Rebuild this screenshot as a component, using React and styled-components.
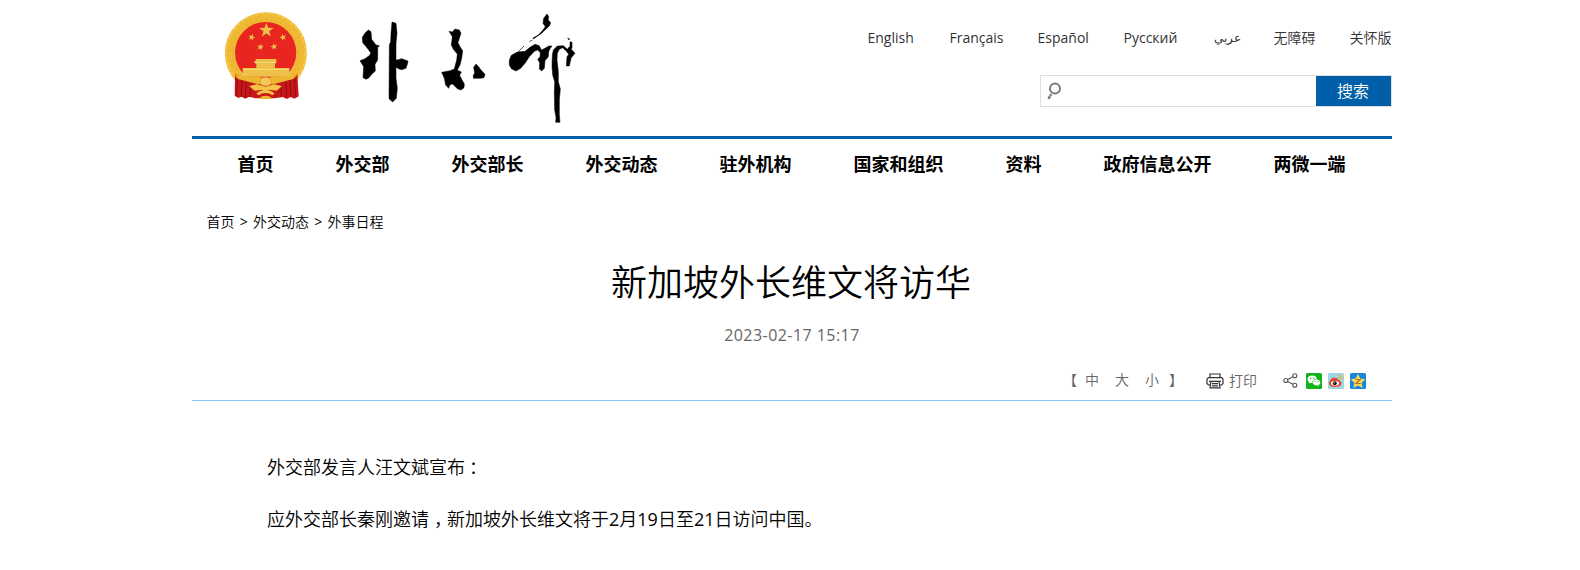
import React from 'react'
import styled, { createGlobalStyle } from 'styled-components';

const languages = [
  { label: 'English', width: 48, weight: 400 },
  { label: 'Français', width: 54, weight: 400 },
  { label: 'Español', width: 52, weight: 400 },
  { label: 'Русский', width: 56, weight: 400 },
  { label: 'عربي', width: 26, weight: 400, size: 12 },
  { label: '无障碍', width: 42 },
  { label: '关怀版', width: 42.5 },
];

const menus = ['首页', '外交部', '外交部长', '外交动态', '驻外机构', '国家和组织', '资料', '政府信息公开', '两微一端'];

const starPoints = (cx, cy, r, turn = -90) =>
  Array.from({ length: 10 }, (_, i) => {
    const radius = i % 2 ? r * 0.4 : r;
    const angle = (turn + i * 36) * Math.PI / 180;
    return `${(cx + radius * Math.cos(angle)).toFixed(1)},${(cy + radius * Math.sin(angle)).toFixed(1)}`;
  }).join(' ');

const Emblem = () => (
  <EmblemSvg viewBox="0 0 300 300">
    <circle cx="152.500" cy="145" r="107" fill="none" stroke="#efb934" strokeWidth="32" />
    <circle cx="152.500" cy="145" r="119" fill="none" stroke="#f4ca50" strokeWidth="5" strokeDasharray="11 5" />
    <circle cx="152" cy="143" r="99" fill="none" stroke="#e0a528" strokeWidth="2" strokeDasharray="7 9" />
    <circle cx="152" cy="143" r="92" fill="#e8251f" />
    <g fill="#edc04a">
      <polygon points={starPoints(154, 76, 23)} />
      <polygon points={starPoints(110, 97, 11, -75)} />
      <polygon points={starPoints(204, 97, 11, -105)} />
      <polygon points={starPoints(136, 126, 11, -75)} />
      <polygon points={starPoints(177, 125, 11, -105)} />
      <path d="M122 162h62v10l-4 5v12h43v14l5 3v9H79v-9l4-3v-14h41v-12l-8-5 6-4z" />
    </g>
    <path d="M84 193h138M118 172h66" stroke="#f9de7c" strokeWidth="3" />
    <path d="M60 207c20 11 40 18 64 17l28 12 29-12c26 1 46-6 66-17l4 67-13 7-11-5-12 6-12-6-24 4H120l-17-5-12 6-12-6-9 4-11-7z" fill="#c8161a" />
    <path d="M68 216l-3 58M81 222l-3 54M94 226l-3 51M106 240l-1 36M238 216l4 58M225 222l3 54M212 226l3 51M199 240l-1 36" stroke="#8f0d13" strokeWidth="3" />
    <path d="M56 208c14 5 33 7 58 6l20 2 18 6 18-6 20-2c25 1 45-1 59-6l-14 14-34 9-24 6-25 3-25-3-24-6-34-9z" fill="#edb630" />
    <path d="M102 243l24-5 26 7 25-7 24 5-16 14-22-3-11 5-11-5-22 3z" fill="#f3c445" />
    <path d="M124 266c12-15 43-15 55 0l-8 5c-9-9-30-9-39 0z" fill="#f2c346" />
    <ellipse cx="152" cy="230" rx="17" ry="13" fill="#f4ca56" stroke="#d6962a" strokeWidth="2" />
    <path d="M133 282c4-13 34-13 38 0z" fill="#edb333" />
  </EmblemSvg>
);

const Calligraphy = () => (
  <CalligraphySvg viewBox="0 0 720 345">
    <path d="M55 60L63 65 65 88 78 105 88 107 83 113 83 150 75 163 76 183 66 192 57 203 48 208 39 203 41 170 30 152 45 146 60 135 62 128 50 112 38 98 37 82 46 68Z" />
    <path d="M126 36L138 40 141 70 138 100 138 150 145 149 155 146 174 153 172 163 168 175 155 179 145 176 138 171 138 205 142 235 139 265 128 276 117 266 118 105 122 95 123 70Z" />
    <path d="M297 64L307 66 315 57 328 60 333 70 328 85 324 98 330 110 338 122 335 145 330 165 322 180 334 186 329 196 335 208 343 222 342 233 333 240 322 236 308 222 300 224 296 235 287 225 283 205 275 187 300 182 313 177 320 150 322 132 310 118 304 105 307 80Z" />
    <g transform="translate(360 0)">
      <path d="M18 162L24 168 33 180 45 193 42 203 30 205 10 205 10 195 14 190 11 172Z" />
      <path d="M231 12L236 20 235 30 242 38 238 48 228 57 215 70 200 80 190 87 189 84 205 75 217 62 226 50 219 40 221 25Z" />
      <path d="M178 95L187 90M145 125L162 108" fill="none" strokeWidth="2" />
      <path d="M118 150L124 136 142 126 165 124 180 112 195 103 208 107 214 120 225 115 236 108 246 108 240 116 236 125 235 140 225 152 223 175 215 183 208 177 209 158 203 148 210 140 211 128 203 120 193 124 178 140 165 160 152 175 138 183 124 176 118 165Z" />
      <path d="M247 135L250 120 262 108 280 107 292 118 298 110 304 118 315 130 308 138 303 145 298 168 289 168 291 140 296 133 288 122 278 113 268 118 262 130 261 150 265 185 265 215 271 237 268 270 268 315 270 337 257 337 258 322 254 300 253 250 254 215 248 195 246 170Z" />
      <path d="M293 84L299 87 297 90ZM300 95L306 97 306 115 300 118Z" />
    </g>
  </CalligraphySvg>
);

const SearchIcon = () => (
  <svg width="16" height="18" viewBox="0 0 16 18" fill="none" stroke="#7b7b7b">
    <circle cx="9" cy="6.500" r="5" strokeWidth="2" />
    <path d="M5.200 12.200L2.500 16.800" strokeWidth="2.600" />
    <path d="M2.400 13.200l4 2" stroke="#fff" strokeWidth=".5" />
  </svg>
);

const PrintIcon = () => (
  <svg width="18" height="16" viewBox="0 0 18 16" fill="none" stroke="#333" strokeWidth="1.200">
    <path d="M4 4.500V1h10v3.500M4 12H2.400L1 10.500V6l1.400-1.400h13.200L17 6v4.500L15.600 12H14" />
    <path d="M5 8.500h8l1 6.400H4zM6 10.600h6M6 12.800h6M3 8.400h12" />
  </svg>
);

const ShareIcon = () => (
  <svg width="15" height="15" viewBox="0 0 15 15" fill="none" stroke="#555" strokeWidth="1.100">
    <circle cx="2.800" cy="7.500" r="2" />
    <circle cx="11.800" cy="2.800" r="2" />
    <circle cx="11.800" cy="12.200" r="2" />
    <path d="M4.700 6.500l5.200-2.700M4.700 8.500l5.200 2.700" />
  </svg>
);

const WechatIcon = () => (
  <svg width="16" height="16" viewBox="0 0 16 16">
    <rect width="16" height="16" rx="1.500" fill="#10b31b" />
    <path d="M6.200 2.500C3.600 2.500 1.500 4.200 1.500 6.300c0 1.200.7 2.200 1.700 2.900l-.4 1.500 1.700-.9c3.800.9 6.400-1.100 6.400-3.500 0-2.100-2.100-3.800-4.700-3.800z" fill="#fff" />
    <path d="M10.600 6.200c-2.200 0-4 1.400-4 3.300s1.800 3.300 4 3.300l1.300-.2 1.500.9-.4-1.400c1-.6 1.600-1.500 1.600-2.600 0-1.900-1.800-3.300-4-3.300z" fill="#fff" stroke="#10b31b" strokeWidth=".6" />
    <g fill="#10b31b">
      <circle cx="4.700" cy="5.200" r=".7" />
      <circle cx="7.900" cy="5.200" r=".7" />
      <circle cx="9.300" cy="8.600" r=".6" />
      <circle cx="12" cy="8.600" r=".6" />
    </g>
  </svg>
);

const WeiboIcon = () => (
  <svg width="16" height="16" viewBox="0 0 16 16">
    <rect width="16" height="16" rx="1.500" fill="#9bd7e4" />
    <path d="M6.900 5.200c1.200-.5 2.400-.4 2.700.6l-.1 1.100c1.600-.4 2.600.2 2.400 1.400 1.300.5 1.900 1.400 1.600 2.400-.5 2-3.200 3.300-6.300 3.300-3.500 0-6.200-1.400-6.200-3.700 0-2.200 3.100-5.700 5.100-5.700.8 0 1 .3.800.6z" fill="#e8452a" />
    <ellipse cx="7" cy="10.300" rx="4" ry="2.400" fill="#fff" />
    <circle cx="6.800" cy="10.300" r="2" fill="#161616" />
    <circle cx="6.200" cy="9.800" r=".6" fill="#fff" />
    <path d="M10.200 2.500c2.700-.5 4.700 1.400 4.200 4M10.400 4.500c1.400-.2 2.300.7 2.100 2" fill="none" stroke="#f2b23b" strokeWidth="1.200" />
  </svg>
);

const QzoneIcon = () => (
  <svg width="16" height="16" viewBox="0 0 16 16">
    <rect width="16" height="16" rx="1.500" fill="#1687dc" />
    <path d="M8 .8l2.200 4.700 5.200.7-3.800 3.600 1 5.200L8 12.600 3.400 15l1-5.200L.6 6.200l5.200-.7z" fill="#fbd95a" />
    <path d="M5.500 6.500h4.800L6 10.500h4.800" fill="none" stroke="#b5761b" strokeWidth="1.200" />
  </svg>
);

const App = () => {
  return (
    <>
      <GlobalStyle />
      <Page>
        <Header>
          <Emblem />
          <Calligraphy />
          <HeaderSide>
            <LanguageList>
              {languages.map(item => (
                <Language key={item.label} $width={item.width} $weight={item.weight} $size={item.size}>{item.label}</Language>
              ))}
            </LanguageList>
            <SearchBox>
              <SearchIcon />
              <SearchButton>搜索</SearchButton>
            </SearchBox>
          </HeaderSide>
        </Header>
        <Nav>
          {menus.map(menu => <a key={menu}>{menu}</a>)}
        </Nav>
        <Breadcrumb>
          <a>首页</a>
          <span>&gt;</span>
          <a>外交动态</a>
          <span>&gt;</span>
          <a>外事日程</a>
        </Breadcrumb>
        <Title>新加坡外长维文将访华</Title>
        <PublishDate>2023-02-17 15:17</PublishDate>
        <Toolbar>
          <FontSizes>
            <span>【</span>
            <a>中</a>
            <a>大</a>
            <a>小</a>
            <span>】</span>
          </FontSizes>
          <PrintButton>
            <PrintIcon />
            打印
          </PrintButton>
          <ShareList>
            <ShareIcon />
            <WechatIcon />
            <WeiboIcon />
            <QzoneIcon />
          </ShareList>
        </Toolbar>
        <Article>
          <p>外交部发言人汪文斌宣布<Mark $shift={4}>：</Mark></p>
          <p>
            应外交部长秦刚邀请<Mark $shift={5}>，</Mark>新加坡外长维文将于<Num>2</Num>月<Num>19</Num>日至<Num>21</Num>日访问中国。
          </p>
        </Article>
      </Page>
    </>
  )
}

const GlobalStyle = createGlobalStyle`
  * {
    box-sizing: border-box;
  }

  body {
    margin: 0;
    background: #fff;
    color: #000;
    font-family: "Open Sans", "Noto Sans CJK SC", sans-serif;
    font-weight: 350;
  }

  h1, p {
    margin: 0;
    font-weight: inherit;
  }

  svg {
    display: block;
    flex: none;
  }
`;

const Page = styled.div`
  width: 1200px;
  height: 570px;
  margin-left: 192px;
  overflow: hidden;
`;

const Header = styled.header`
  display: flex;
  align-items: flex-start;
  height: 139px;
  border-bottom: 3px solid #005fa8;
`;

const EmblemSvg = styled.svg`
  width: 100px;
  height: 100px;
  margin: 5px 0 0 23px;
`;

const CalligraphySvg = styled.svg`
  width: 240px;
  height: 115px;
  margin: 10px 0 0 35px;
  stroke: #000;
  stroke-width: 1.5;
`;

const HeaderSide = styled.div`
  display: flex;
  flex-direction: column;
  align-items: flex-end;
  margin-left: auto;
  padding-top: 28px;
`;

const LanguageList = styled.div`
  display: flex;
  gap: 34px;
  height: 20px;
  color: #333;
`;

const Language = styled.a`
  width: ${({ $width }) => $width}px;
  font-size: ${({ $size }) => $size || 14}px;
  font-weight: ${({ $weight }) => $weight || 350};
  line-height: 20px;
  white-space: nowrap;
`;

const SearchBox = styled.div`
  display: flex;
  justify-content: space-between;
  width: 352px;
  height: 32px;
  margin-top: 27px;
  border: 1px solid #dedede;

  svg {
    margin: 6px 0 0 5px;
  }
`;

const SearchButton = styled.div`
  width: 75px;
  height: 30px;
  padding-right: 1px;
  background: #005fa8;
  color: #fff;
  font-size: 16px;
  line-height: 31px;
  text-align: center;
`;

const Nav = styled.nav`
  display: flex;
  gap: 62px;
  padding: 12px 0 0 45.500px;
  font-size: 18px;
  font-weight: 700;
  line-height: 27px;
  white-space: nowrap;
`;

const Breadcrumb = styled.div`
  display: flex;
  padding: 34px 0 0 14.500px;
  font-size: 14px;
  line-height: 20px;

  span {
    width: 18.500px;
    font-weight: 400;
    text-align: center;
  }
`;

const Title = styled.h1`
  margin-top: 24px;
  padding-right: 2px;
  font-size: 36px;
  line-height: 54px;
  text-align: center;
`;

const PublishDate = styled.p`
  margin-top: 13px;
  color: #666;
  font-size: 16px;
  font-weight: 400;
  line-height: 24px;
  letter-spacing: 0.45px;
  text-align: center;
`;

const Toolbar = styled.div`
  display: flex;
  align-items: center;
  justify-content: flex-end;
  height: 54px;
  padding: 14px 26px 0 0;
  border-bottom: 1px solid #8fc9fa;
  color: #666;
  font-size: 14px;
  line-height: 20px;
`;

const FontSizes = styled.div`
  display: flex;
  margin: -1px 23px 0 0;

  a {
    margin: 0 8px;
  }

  span:last-child {
    margin-left: 2px;
  }
`;

const PrintButton = styled.div`
  display: flex;
  align-items: center;
  gap: 5px;
  margin-right: 26px;
`;

const ShareList = styled.div`
  display: flex;
  align-items: center;
  gap: 6px;

  svg:first-child {
    margin-right: 2px;
  }
`;

const Article = styled.article`
  padding: 40px 0 0 75px;
  font-size: 18px;
  line-height: 52px;
`;

const Mark = styled.span`
  display: inline-block;
  width: 18px;
  padding-left: ${({ $shift }) => $shift}px;
  font-feature-settings: "halt";
`;

const Num = styled.span`
  font-weight: 400;
`;

export default App
